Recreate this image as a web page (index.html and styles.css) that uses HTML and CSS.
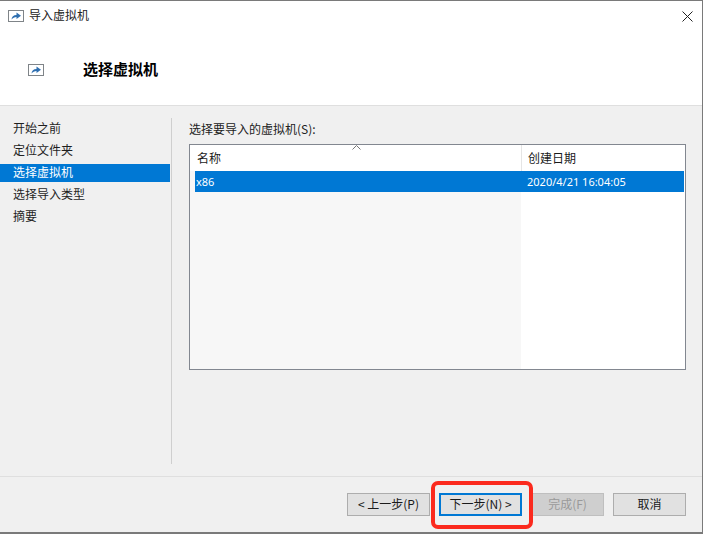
FILE: index.html
```html
<!DOCTYPE html>
<html lang="zh-CN">
<head>
<meta charset="utf-8">
<title>导入虚拟机</title>
<link rel="stylesheet" href="styles.css">
</head>
<body>
<div class="window">
  <div class="top">
    <div class="titlebar">
      <svg class="icon" width="17" height="12" viewBox="0 0 17 12"><rect x="0.5" y="0.5" width="15" height="11" fill="#fff" stroke="#7f8488"/><path d="M3.500 9.500c.2-3 2-4.500 5-4.600V2.500L13 5.800 8.500 9V6.900C6.500 6.900 4.800 7.800 3.500 9.500z" fill="#2f6fb0"/></svg>
      <span class="wintitle">导入虚拟机</span>
      <svg class="close" width="11" height="11" viewBox="0 0 11 11"><path d="M.5.5l10 10M10.500.5l-10 10" stroke="#222" stroke-width="1" fill="none"/></svg>
    </div>
    <div class="pagehead">
      <svg class="icon" width="17" height="12" viewBox="0 0 17 12"><rect x="0.5" y="0.5" width="15" height="11" fill="#fff" stroke="#7f8488"/><path d="M3.500 9.500c.2-3 2-4.500 5-4.600V2.500L13 5.800 8.500 9V6.900C6.500 6.900 4.800 7.800 3.500 9.500z" fill="#2f6fb0"/></svg>
      <span class="pagetitle">选择虚拟机</span>
    </div>
  </div>
  <div class="middle">
    <nav class="steps">
      <div class="step">开始之前</div>
      <div class="step">定位文件夹</div>
      <div class="step current">选择虚拟机</div>
      <div class="step">选择导入类型</div>
      <div class="step">摘要</div>
    </nav>
    <main class="content">
      <div class="label">选择要导入的虚拟机(S):</div>
      <div class="list">
        <div class="list-head">
          <div class="col-name">名称</div>
          <div class="col-date">创建日期</div>
          <svg class="sort" width="9" height="5" viewBox="0 0 9 5"><path d="M.5 4.500l4-4 4 4" stroke="#777" fill="none"/></svg>
        </div>
        <div class="list-body">
          <div class="row-wrap">
            <div class="row"><span class="cell-name">x86</span><span class="cell-date">2020/4/21 16:04:05</span></div>
          </div>
        </div>
      </div>
    </main>
  </div>
  <div class="footer">
    <button class="btn back">&lt; 上一步(P)</button>
    <button class="btn next">下一步(N) &gt;</button>
    <button class="btn finish" disabled>完成(F)</button>
    <button class="btn cancel">取消</button>
    <div class="highlight"></div>
  </div>
</div>
</body>
</html>
```
FILE: styles.css
```css
* { box-sizing: border-box; }
html, body { margin: 0; padding: 0; }
body {
  width: 703px;
  height: 534px;
  overflow: hidden;
  background: #fff;
  font-family: "Noto Sans CJK SC", "Noto Sans", sans-serif;
  font-size: 12px;
  color: #1a1a1a;
}
.window {
  width: 703px;
  height: 534px;
  display: flex;
  flex-direction: column;
  border-top: 1px solid #7a7a7a;
  border-right: 1px solid #7a7a7a;
  border-bottom: 2px solid #7a7a7a;
  background: #f0f0f0;
}
.top {
  height: 105px;
  background: #fff;
  border-bottom: 1px solid #dfdfdf;
}
.titlebar {
  height: 30px;
  display: flex;
  align-items: center;
  padding-left: 8px;
}
.wintitle { margin-left: 4px; line-height: 16px; margin-top: -2px; color: #222; }
.close { margin-left: auto; margin-right: 9px; }
.pagehead {
  height: 50px;
  display: flex;
  align-items: center;
  padding-left: 28px;
  padding-top: 27px;
}
.pagetitle {
  margin-left: 38px;
  font-size: 15px;
  font-weight: 700;
  margin-top: -2px;
  color: #000;
}
.middle {
  flex: 1;
  display: flex;
  padding-top: 12px;
  padding-bottom: 12px;
  min-height: 0;
}
.steps {
  width: 172px;
  border-right: 1px solid #cfcfcf;
}
.step {
  height: 22px;
  line-height: 19px;
  padding-left: 13px;
  margin-right: 1px;
  color: #1f1f1f;
}
.step.current {
  height: 18px;
  line-height: 16px;
  margin: 2px 1px 2px 0;
  background: #0078d4;
  color: #fff;
}
.content {
  flex: 1;
  padding-left: 17px;
  padding-right: 16px;
}
.label { height: 26px; line-height: 20px; padding-top: 1px; color: #222; }
.list {
  width: 497px;
  height: 226px;
  border: 1px solid #828790;
  background: #fff;
  display: flex;
  flex-direction: column;
}
.list-head {
  height: 26px;
  display: flex;
  position: relative;
  background: #fff;
}
.col-name { width: 331px; padding-left: 7px; line-height: 25px; }
.col-date { flex: 1; border-left: 1px solid #e5e5e5; padding-left: 6px; line-height: 25px; }
.sort { position: absolute; left: 162px; top: 0; }
.list-body {
  flex: 1;
  background: linear-gradient(to right, #f7f7f7 331px, #fff 331px);
}
.row-wrap { padding: 0 1px 0 5px; }
.row {
  height: 21px;
  display: flex;
  align-items: center;
  background: #0078d4;
  color: #fff;
  font-family: "Noto Sans", sans-serif;
  font-size: 11px;
}
.cell-name { width: 332px; padding-left: 1px; }
.footer {
  height: 56px;
  border-top: 1px solid #dfdfdf;
  display: flex;
  align-items: flex-start;
  padding-top: 16px;
  padding-left: 347px;
  position: relative;
}
.btn {
  height: 23px;
  padding: 0 0 2px;
  background: #e1e1e1;
  border: 1px solid #adadad;
  font-family: "Noto Sans CJK SC", "Noto Sans", sans-serif;
  font-size: 12px;
  color: #1a1a1a;
}
.back { width: 83px; }
.next { width: 83px; margin-left: 9px; border: 2px solid #0078d4; }
.finish { width: 73px; margin-left: 9px; background: #cfcfcf; border-color: #bfbfbf; color: #9a9a9a; }
.cancel { width: 73px; margin-left: 9px; }
.highlight {
  position: absolute;
  left: 431px;
  top: 4px;
  width: 102px;
  height: 48px;
  border: 4px solid #fb2a1e;
  border-radius: 7px;
}
```
